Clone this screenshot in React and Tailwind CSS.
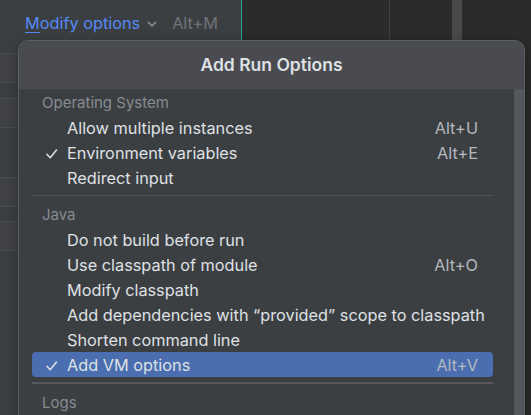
import React from "react";

const Check = () => (
  <svg width="12" height="10" viewBox="0 0 12 10" className="shrink-0">
    <path d="M1 5.2 L4.2 8.8 L10.5 1" fill="none" stroke="#dfe1e5" strokeWidth="1.5" strokeLinecap="round" strokeLinejoin="round" />
  </svg>
);

function Item({ label, shortcut, checked, selected }) {
  return (
    <div className={"h-[25px] ml-[13px] mr-[21px] flex items-center rounded-[4px] " + (selected ? "bg-[#4a6eaf]" : "")}>
      <div className="w-[35px] pl-[14px] flex items-center translate-y-[1px]">{checked ? <Check /> : null}</div>
      <div className="flex-1 text-[#dfe1e5] whitespace-nowrap translate-y-[1px]">{label}</div>
      {shortcut ? <div className="pr-[15px] text-[#b4b8bf] whitespace-nowrap translate-y-[1px]">{shortcut}</div> : null}
    </div>
  );
}

function Section({ label }) {
  return (
    <div className="h-[25px] ml-[13px] mr-[21px] flex items-center pl-[10px] text-[15px] text-[#868a91]">
      <span className="translate-y-[1px]">{label}</span>
    </div>
  );
}

export default function App() {
  return (
    <div
      className="relative w-[531px] h-[415px] overflow-hidden flex text-[16.3px]"
      style={{ fontFamily: "Inter, 'Noto Sans', sans-serif" }}
    >
      {/* left panel */}
      <div className="w-[241px] h-full bg-[#3c3f41] flex flex-col">
        <div className="h-[53px] pb-[7px] flex items-center pl-[25px] whitespace-nowrap">
          <span className="text-[#548af7]">
            <span className="underline underline-offset-[3px]">M</span>odify options
          </span>
          <svg width="10" height="6" viewBox="0 0 10 6" className="ml-[7px] mt-[1px]">
            <path d="M1 1 L5 5 L9 1" fill="none" stroke="#9da0a8" strokeWidth="1.2" />
          </svg>
          <span className="ml-[15px] text-[#6f737a]">Alt+M</span>
        </div>
        <div className="h-[30px] border-y border-[#4c4f52] bg-[#404245]" />
        <div className="h-[15px]" />
        <div className="h-[30px] border-y border-[#4c4f52] bg-[#404245]" />
        <div className="h-[49px]" />
        <div className="h-[30px] border-y border-[#4c4f52] bg-[#404245]" />
        <div className="h-[14px]" />
        <div className="h-[30px] border-y border-[#4c4f52] bg-[#404245]" />
      </div>
      {/* editor area */}
      <div className="flex-1 h-full bg-[#2b2b2b] border-l border-[#26a69a] flex">
        <div className="w-[148px] h-full border-r border-[#3f3f3f]" />
        <div className="w-[62px] h-full" />
        <div className="w-[10px] h-full bg-[#4a4a4a]" />
      </div>

      {/* popup */}
      <div className="absolute left-[18px] top-[40px] w-[507px] h-[420px] rounded-t-[10px] border border-[#5b5e63] bg-[#3c3f42] overflow-hidden flex flex-col shadow-[0_4px_14px_rgba(0,0,0,0.35)]">
        <div className="h-[48px] shrink-0 bg-[#494b50] flex items-center justify-center text-[17.5px] font-semibold text-[#dfe1e5]">
          Add Run Options
        </div>
        <div className="flex-1 flex">
          <div className="flex-1 pt-[1px] flex flex-col">
            <Section label="Operating System" />
            <Item label="Allow multiple instances" shortcut="Alt+U" />
            <Item label="Environment variables" shortcut="Alt+E" checked />
            <Item label="Redirect input" />
            <div className="ml-[13px] mr-[21px] pt-[5px] pb-[6px]">
              <div className="h-px bg-[#4f5257]" />
            </div>
            <Section label="Java" />
            <Item label="Do not build before run" />
            <Item label="Use classpath of module" shortcut="Alt+O" />
            <Item label="Modify classpath" />
            <Item label="Add dependencies with “provided” scope to classpath" />
            <Item label="Shorten command line" />
            <Item label="Add VM options" shortcut="Alt+V" checked selected />
            <div className="ml-[13px] mr-[21px] pt-[5px] pb-[6px]">
              <div className="h-[2px] bg-[#55585d]" />
            </div>
            <Section label="Logs" />
          </div>
          <div className="w-[10px] h-full bg-[#54575b]" />
        </div>
      </div>
    </div>
  );
}
